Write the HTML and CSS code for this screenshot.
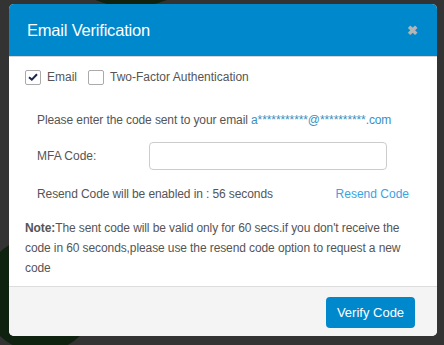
FILE: index.html
```html
<!DOCTYPE html>
<html lang="en">
<head>
    <meta charset="UTF-8">
    <meta name="viewport" content="width=device-width, initial-scale=1.0">
    <title>Email Verification</title>
    <link rel="stylesheet" href="styles.css">
</head>
<body>
    <!-- 背景 -->
    <div class="blob blob-top"></div>
    <div class="blob blob-bottom"></div>

    <div class="modal">
        <div class="modal-header">
            <h3 class="modal-title">Email Verification</h3>
            <span class="close">&#10006;</span>
        </div>

        <div class="modal-body">
            <div class="options">
                <label class="check">
                    <span class="box checked">
                        <svg width="10" height="8" viewBox="0 0 10 8"><path d="M1 4.2 L3.8 6.6 L9 1.2" fill="none" stroke="#1a2a4a" stroke-width="2"/></svg>
                    </span>
                    Email
                </label>
                <label class="check">
                    <span class="box"></span>
                    Two-Factor Authentication
                </label>
            </div>

            <div class="inner">
                <p class="sent">Please enter the code sent to your email <a href="#">a***********@**********.com</a></p>

                <div class="field">
                    <label for="mfaCode">MFA Code:</label>
                    <input type="text" id="mfaCode">
                </div>

                <div class="resend">
                    <span>Resend Code will be enabled in : 56 seconds</span>
                    <a href="#" class="resend-link">Resend Code</a>
                </div>
            </div>

            <p class="note"><b>Note:</b>The sent code will be valid only for 60 secs.if you don't receive the code in 60 seconds,please use the resend code option to request a new code</p>
        </div>

        <div class="modal-footer">
            <button>Verify Code</button>
        </div>
    </div>
</body>
</html>
```

FILE: styles.css
```css
body {
    font-family: "Liberation Sans", Arial, sans-serif;
    background-color: #333;
    margin: 0;
    padding: 4px 7px 0 9px;
    height: 345px;
    box-sizing: border-box;
    overflow: hidden;
    position: relative;
}

.blob {
    position: absolute;
    background-color: #0f2210;
    border-radius: 50%;
}

.blob-top {
    width: 190px;
    height: 190px;
    left: 36px;
    top: -183px;
}

.blob-bottom {
    width: 116px;
    height: 116px;
    left: -18px;
    top: 236px;
}

.modal {
    position: relative;
    width: 428px;
    background-color: #fff;
    border-radius: 5px;
    overflow: hidden;
}

.modal-header {
    background-color: #0088cc;
    height: 52px;
    display: flex;
    align-items: center;
    justify-content: space-between;
    padding: 0 19px 0 18px;
    border-bottom: 1px solid #d6d6d6;
}

.modal-title {
    margin: 0;
    color: #fff;
    font-size: 16.5px;
    font-weight: normal;
    letter-spacing: -0.2px;
}

.close {
    color: #b5b5b5;
    font-size: 13px;
    font-weight: bold;
}

.modal-body {
    padding: 12px 28px 0 16px;
    height: 217px;
    color: #555;
    font-size: 12px;
}

.options {
    display: flex;
    gap: 11px;
}

.check {
    display: flex;
    align-items: center;
    gap: 6px;
    height: 16px;
    color: #555;
}

.box {
    width: 14px;
    height: 13px;
    border: 1px solid #aaa;
    border-radius: 2px;
    display: flex;
    align-items: center;
    justify-content: center;
}

.inner {
    padding-left: 12px;
}

.sent {
    margin: 26px 0 0;
    line-height: 18px;
    letter-spacing: -0.1px;
}

.sent a {
    color: #3a8fc2;
    text-decoration: none;
}

.field {
    display: flex;
    align-items: center;
    margin-top: 13px;
}

.field label {
    width: 112px;
}

.field input {
    width: 238px;
    height: 28px;
    box-sizing: border-box;
    border: 1px solid #ccc;
    border-radius: 4px;
    padding: 4px 8px;
    font-size: 12px;
}

.resend {
    display: flex;
    justify-content: space-between;
    margin-top: 15px;
    line-height: 18px;
}

.resend span {
    letter-spacing: -0.1px;
}

.resend-link {
    color: #3aa3e3;
    text-decoration: none;
}

.note {
    margin: 15px 0 0;
    line-height: 20px;
    letter-spacing: -0.1px;
}

.note b {
    color: #555;
}

.modal-footer {
    background-color: #f4f4f4;
    border-top: 1px solid #ddd;
    height: 50px;
    display: flex;
    justify-content: flex-end;
    align-items: flex-start;
    padding: 10px 22px 0 0;
    box-sizing: border-box;
}

button {
    background-color: #0088cc;
    color: #fff;
    border: none;
    border-radius: 4px;
    width: 89px;
    height: 31px;
    font-family: "Liberation Sans", Arial, sans-serif;
    font-size: 13px;
    cursor: pointer;
}
```
